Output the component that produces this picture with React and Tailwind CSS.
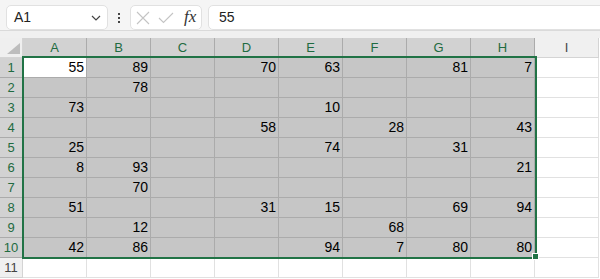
import React from "react";

const COLS = ["A", "B", "C", "D", "E", "F", "G", "H", "I"];
const DATA = {
  1: { A: 55, B: 89, D: 70, E: 63, G: 81, H: 7 },
  2: { B: 78 },
  3: { A: 73, E: 10 },
  4: { D: 58, F: 28, H: 43 },
  5: { A: 25, E: 74, G: 31 },
  6: { A: 8, B: 93, H: 21 },
  7: { B: 70 },
  8: { A: 51, D: 31, E: 15, G: 69, H: 94 },
  9: { B: 12, F: 68 },
  10: { A: 42, B: 86, E: 94, F: 7, G: 80, H: 80 },
  11: {},
};

function Toolbar() {
  return (
    <div className="flex items-start h-[31px] pt-[5px] pl-[6px] bg-[#f5f5f5] border-b border-[#dadada] overflow-hidden">
      <div className="flex shrink-0 items-center justify-between w-[102px] h-[25px] bg-white border border-[#e1e1e1] rounded-[5px] pl-[7px] pr-[6px]">
        <span className="text-[14px] text-[#222]">A1</span>
        <svg width="10" height="6" viewBox="0 0 10 6">
          <path d="M1 1 L5 5 L9 1" fill="none" stroke="#444" strokeWidth="1.2" />
        </svg>
      </div>
      <div className="flex shrink-0 flex-col items-center justify-center gap-[2px] w-[22px] h-[25px]">
        <div className="w-[2px] h-[2px] bg-[#444]" />
        <div className="w-[2px] h-[2px] bg-[#444]" />
        <div className="w-[2px] h-[2px] bg-[#444]" />
      </div>
      <div className="flex shrink-0 items-center w-[72px] h-[25px] bg-white border border-[#e1e1e1] rounded-[5px] pl-[5px]">
        <svg width="14" height="14" viewBox="0 0 14 14" className="shrink-0">
          <path d="M1 1 L13 13 M13 1 L1 13" stroke="#c4c4c4" strokeWidth="1.1" fill="none" />
        </svg>
        <svg width="16" height="12" viewBox="0 0 16 12" className="ml-[8px] shrink-0">
          <path d="M1 6 L5.5 10.5 L15 1" stroke="#c4c4c4" strokeWidth="1.1" fill="none" />
        </svg>
        <span
          className="ml-[10px] text-[17px] italic text-[#333] leading-none -mt-[2px]"
          style={{ fontFamily: '"Liberation Serif", serif' }}
        >
          fx
        </span>
      </div>
      <div className="flex shrink-0 items-center ml-[6px] w-[420px] h-[25px] bg-white border border-[#e1e1e1] rounded-[5px] pl-[10px]">
        <span className="text-[14px] text-[#222]">55</span>
      </div>
    </div>
  );
}

function HeaderRow() {
  return (
    <div className="flex h-[20px]">
      <div className="relative w-[23px] h-[20px] bg-[#efefef] border-r border-b border-[#d4d4d4]">
        <svg width="14" height="11" viewBox="0 0 14 11" className="absolute left-[7px] top-[5px]">
          <path d="M13 0 L13 11 L0 11 Z" fill="#bdbdbd" />
        </svg>
      </div>
      {COLS.map((c) => {
        const sel = c !== "I";
        return (
          <div
            key={c}
            className={
              sel
                ? "flex items-center justify-center w-[64px] h-[20px] bg-[#d2d2d2] border-r border-b border-[#ababab] text-[13px] text-[#1f6b41]"
                : "flex items-center justify-center w-[64px] h-[20px] bg-[#f0f0f0] border-r border-b border-[#d4d4d4] text-[13px] text-[#444]"
            }
          >
            {c}
          </div>
        );
      })}
    </div>
  );
}

function Row({ n }) {
  const selRow = n <= 10;
  return (
    <div className="flex h-[20px]">
      <div
        className={
          selRow
            ? "flex items-center justify-center w-[23px] h-[20px] bg-[#d2d2d2] border-r border-b border-[#ababab] text-[13px] text-[#1f6b41]"
            : "flex items-center justify-center w-[23px] h-[20px] bg-[#f0f0f0] border-r border-b border-[#d4d4d4] text-[13px] text-[#444]"
        }
      >
        {n}
      </div>
      {COLS.map((c) => {
        const sel = selRow && c !== "I";
        const active = n === 1 && c === "A";
        const v = DATA[n][c];
        let cls = "flex items-center justify-end pr-[2px] w-[64px] h-[20px] border-r border-b text-[14px] text-black ";
        if (active) cls += "bg-white border-[#ababab]";
        else if (sel) cls += "bg-[#c6c6c6] border-[#ababab]";
        else cls += "bg-white border-[#e1e1e1]";
        return (
          <div key={c} className={cls}>
            {v !== undefined ? v : ""}
          </div>
        );
      })}
    </div>
  );
}

export default function App() {
  return (
    <div
      className="w-[600px] h-[279px] overflow-hidden bg-white"
      style={{ fontFamily: '"Liberation Sans", Arial, sans-serif' }}
    >
      <Toolbar />
      <div className="h-[7px] bg-[#f0f0f0]" />
      <div className="relative">
        <HeaderRow />
        {Array.from({ length: 11 }, (_, i) => (
          <Row key={i} n={i + 1} />
        ))}
        <div className="absolute left-[22px] top-[18px] w-[515px] h-[203px] border-2 border-[#217346] pointer-events-none" />
        <div className="absolute left-[532px] top-[215px] w-[7px] h-[7px] bg-[#217346] border border-white" />
      </div>
    </div>
  );
}
